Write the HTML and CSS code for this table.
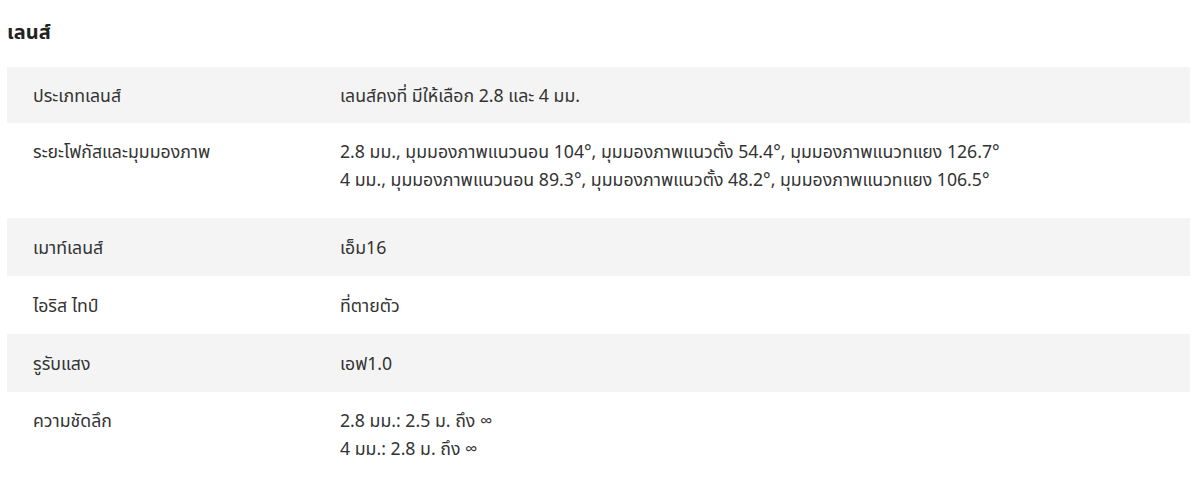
FILE: index.html
```html
<!DOCTYPE html>
<html lang="th">
<head>
<meta charset="utf-8">
<link rel="stylesheet" href="styles.css">
</head>
<body>
<section class="spec">
  <h2 class="spec-title">เลนส์</h2>
  <div class="spec-table">
    <div class="row alt first">
      <div class="label">ประเภทเลนส์</div>
      <div class="value"><p>เลนส์คงที่ มีให้เลือก 2.8 และ 4 มม.</p></div>
    </div>
    <div class="row tall">
      <div class="label">ระยะโฟกัสและมุมมองภาพ</div>
      <div class="value">
        <p>2.8 มม., มุมมองภาพแนวนอน 104°, มุมมองภาพแนวตั้ง 54.4°, มุมมองภาพแนวทแยง 126.7°</p>
        <p>4 มม., มุมมองภาพแนวนอน 89.3°, มุมมองภาพแนวตั้ง 48.2°, มุมมองภาพแนวทแยง 106.5°</p>
      </div>
    </div>
    <div class="row alt">
      <div class="label">เมาท์เลนส์</div>
      <div class="value"><p>เอ็ม16</p></div>
    </div>
    <div class="row">
      <div class="label">ไอริส ไทป์</div>
      <div class="value"><p>ที่ตายตัว</p></div>
    </div>
    <div class="row alt">
      <div class="label">รูรับแสง</div>
      <div class="value"><p>เอฟ1.0</p></div>
    </div>
    <div class="row tall">
      <div class="label">ความชัดลึก</div>
      <div class="value">
        <p>2.8 มม.: 2.5 ม. ถึง ∞</p>
        <p>4 มม.: 2.8 ม. ถึง ∞</p>
      </div>
    </div>
  </div>
</section>
</body>
</html>
```
FILE: styles.css
```css
* { box-sizing: border-box; }
html, body { margin: 0; padding: 0; background: #fff; }
body {
  font-family: "Noto Sans", "Noto Sans Thai", "Open Sans", sans-serif;
  color: #333;
  font-size: 17.7px;
}
.spec { padding: 18px 10px 0 7px; }
.spec-title {
  margin: 0 0 21px 0;
  font-size: 20px;
  font-weight: 700;
  line-height: 28px;
  color: #222;
}
.spec-table { display: flex; flex-direction: column; }
.row {
  display: grid;
  grid-template-columns: 307px 1fr;
  padding: 15px 26px 15px 26px;
  line-height: 28px;
}
.row.first { padding-top: 14px; padding-bottom: 14px; }
.row.alt { background: #f4f4f4; }
.row.tall { padding-top: 14px; padding-bottom: 25px; }
.label { color: #333; }
.value p { margin: 0; }
```
